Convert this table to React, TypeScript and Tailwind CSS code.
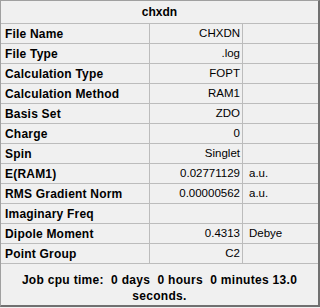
import React from "react";

type Row = {
  label: string;
  value?: string;
  unit?: string;
};

const rows: Row[] = [
  { label: "File Name", value: "CHXDN" },
  { label: "File Type", value: ".log" },
  { label: "Calculation Type", value: "FOPT" },
  { label: "Calculation Method", value: "RAM1" },
  { label: "Basis Set", value: "ZDO" },
  { label: "Charge", value: "0" },
  { label: "Spin", value: "Singlet" },
  { label: "E(RAM1)", value: "0.02771129", unit: "a.u." },
  { label: "RMS Gradient Norm", value: "0.00000562", unit: "a.u." },
  { label: "Imaginary Freq" },
  { label: "Dipole Moment", value: "0.4313", unit: "Debye" },
  { label: "Point Group", value: "C2" },
];

export default function App() {
  return (
    <div className="w-[320px] h-[308px] bg-[#f0f0f0] font-['Liberation_Sans',Arial,sans-serif] text-[11.5px] text-black">
      <div className="w-[320px] h-[307px] flex flex-col border-l border-t border-[#a0a0a0] border-r-2 border-b-2 border-r-[#707070] border-b-[#707070]">
        {/* title row */}
        <div className="h-[23px] flex items-center justify-center font-bold text-[12px] border-b border-[#bcbcbc]">
          chxdn
        </div>

        {/* property rows */}
        {rows.map((r) => (
          <div
            key={r.label}
            className="h-[20px] grid grid-cols-[149px_93px_1fr] border-b border-[#bcbcbc]"
          >
            <div className="flex items-center pl-[4px] font-bold text-[12px] tracking-[0.2px] border-r border-[#bcbcbc]">
              {r.label}
            </div>
            <div className="flex items-center justify-end pr-[2px] border-r border-[#bcbcbc]">
              {r.value}
            </div>
            <div className="flex items-center pl-[6px]">{r.unit}</div>
          </div>
        ))}

        {/* job time footer */}
        <div className="flex-1 pt-[8px] text-center font-bold text-[12px] tracking-[0.3px] leading-[16px] whitespace-pre-wrap">
          {"Job cpu time:  0 days  0 hours  0 minutes 13.0"}
          <br />
          {"seconds."}
        </div>
      </div>
    </div>
  );
}
